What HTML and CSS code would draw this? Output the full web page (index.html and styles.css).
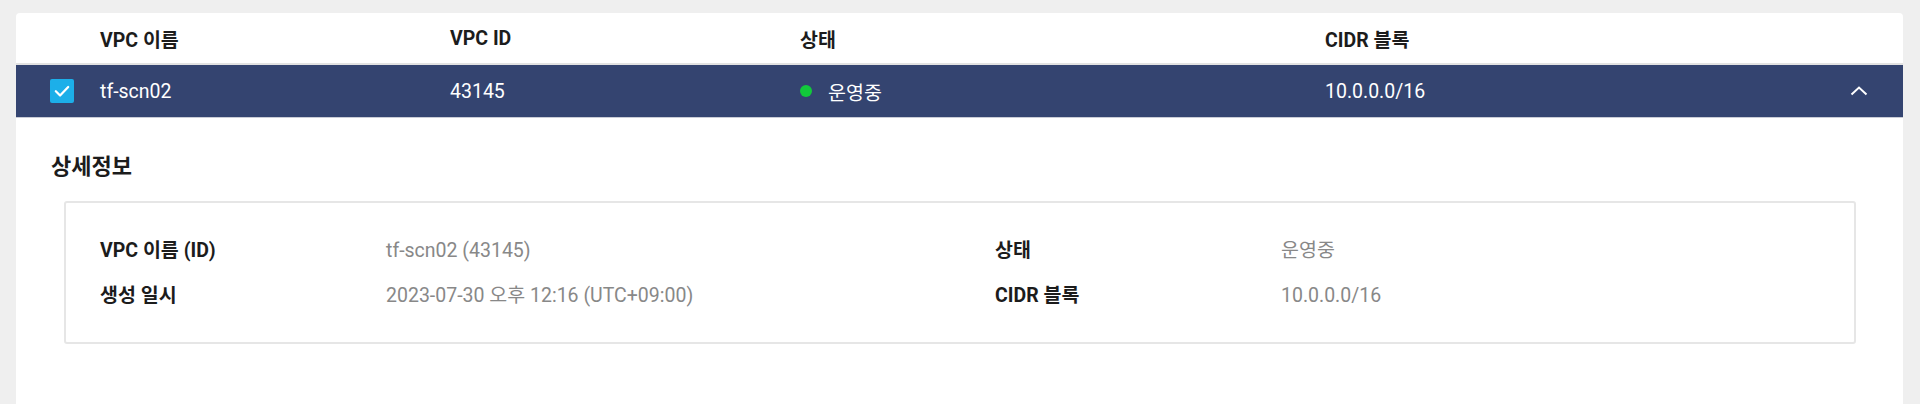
FILE: index.html
```html
<!DOCTYPE html>
<html lang="ko">
<head>
<meta charset="utf-8">
<link rel="stylesheet" href="styles.css">
</head>
<body>
<div class="page">
  <div class="card">
    <div class="row head">
      <div class="cell check"></div>
      <div class="cell c1">VPC 이름</div>
      <div class="cell c2">VPC ID</div>
      <div class="cell c3">상태</div>
      <div class="cell c4">CIDR 블록</div>
    </div>
    <div class="row selected">
      <div class="cell check">
        <span class="checkbox">
          <svg width="18" height="18" viewBox="0 0 16 16"><path d="M2.5 8.2 L6.3 12 L13.5 4.5" fill="none" stroke="#fff" stroke-width="2" stroke-linecap="round" stroke-linejoin="round"/></svg>
        </span>
      </div>
      <div class="cell c1">tf-scn02</div>
      <div class="cell c2">43145</div>
      <div class="cell c3"><span class="dot"></span>운영중</div>
      <div class="cell c4">10.0.0.0/16</div>
      <div class="cell toggle">
        <svg width="18" height="10" viewBox="0 0 18 10"><path d="M1.5 8.5 L9 1.5 L16.5 8.5" fill="none" stroke="#fff" stroke-width="2"/></svg>
      </div>
    </div>
    <div class="detail">
      <h2 class="detail-title">상세정보</h2>
      <div class="info-box">
        <div class="label">VPC 이름 (ID)</div>
        <div class="value">tf-scn02 (43145)</div>
        <div class="label">상태</div>
        <div class="value">운영중</div>
        <div class="label">생성 일시</div>
        <div class="value">2023-07-30 오후 12:16 (UTC+09:00)</div>
        <div class="label">CIDR 블록</div>
        <div class="value">10.0.0.0/16</div>
      </div>
    </div>
  </div>
</div>
</body>
</html>
```
FILE: styles.css
```css
* { box-sizing: border-box; }
html, body {
  margin: 0;
  padding: 0;
  background: #efefef;
  height: 404px;
  overflow: hidden;
}
body {
  font-family: Roboto, "Noto Sans CJK KR", sans-serif;
  font-size: 19.5px;
  color: #222;
}
.page {
  padding: 13px 17px 0 16px;
}
.card {
  background: #fff;
  border-radius: 4px;
  min-height: 420px;
}
.row {
  display: flex;
  align-items: center;
}
.cell { white-space: nowrap; }
.check {
  width: 84px;
  display: flex;
  justify-content: flex-start;
  padding-left: 34px;
}
.c1 { width: 350px; }
.c2 { width: 350px; }
.c3 { width: 525px; display: flex; align-items: center; }
.c4 { flex: 1; }
.head {
  height: 52px;
  font-weight: 700;
  color: #1c1c1c;
  border-bottom: 2px solid #e2e2e2;
}
.selected {
  height: 53px;
  background: #344470;
  color: #fff;
  border-bottom: 1px solid #c9ccd6;
}
.checkbox {
  width: 24px;
  height: 24px;
  border-radius: 2px;
  background: #1cafe9;
  display: flex;
  align-items: center;
  justify-content: center;
}
.dot {
  width: 12px;
  height: 12px;
  border-radius: 50%;
  background: #12c93b;
  margin-right: 16px;
}
.toggle {
  width: 70px;
  display: flex;
  justify-content: flex-start;
  padding-left: 17px;
}
.detail {
  padding: 34px 47px 0 35px;
}
.detail-title {
  margin: 0 0 19px 0;
  font-size: 22px;
  font-weight: 700;
  line-height: 30px;
  color: #1c1c1c;
}
.info-box {
  margin-left: 13px;
  border: 2px solid #e6e6e6;
  border-radius: 3px;
  padding: 35px 20px 33px 34px;
  display: grid;
  grid-template-columns: 286px 609px 286px 1fr;
  row-gap: 19px;
  line-height: 26px;
}
.label {
  font-weight: 700;
  color: #1c1c1c;
}
.value {
  color: #888;
}
```
